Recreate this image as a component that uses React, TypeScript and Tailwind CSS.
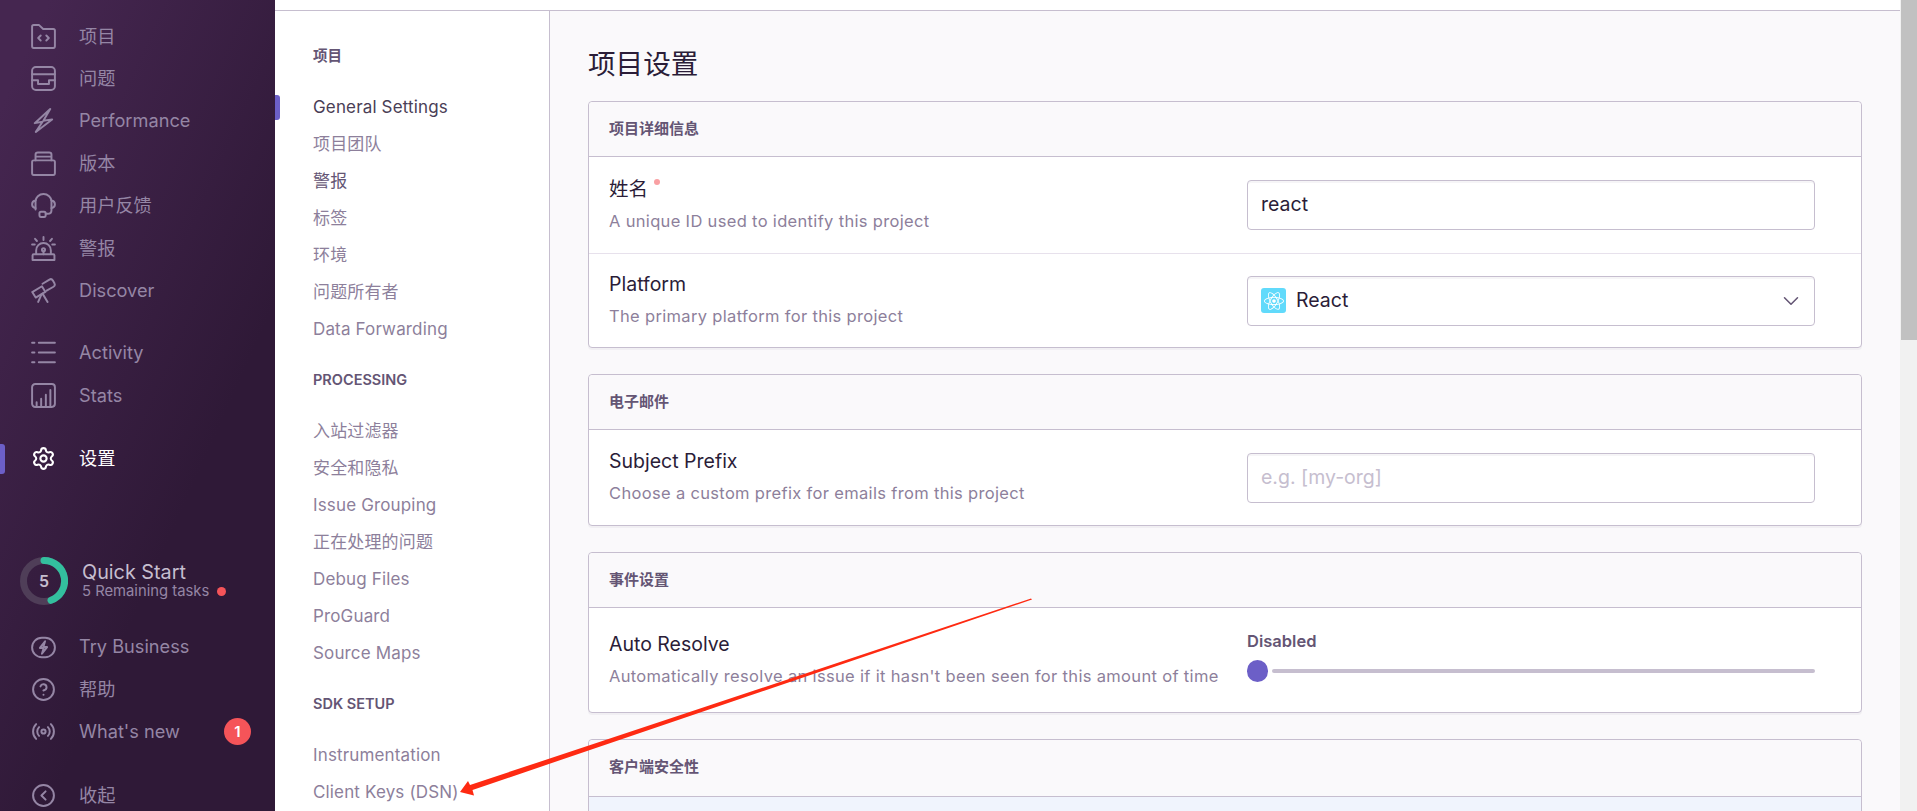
import type { ReactNode } from "react";
import { ChevronDown, CircleChevronLeft, CircleHelp, Radio, Settings } from "lucide-react";
import { FaReact } from "react-icons/fa";

function Ico({ children }: { children: ReactNode }) {
  return (
    <svg viewBox="0 0 16 16" fill="none" stroke="currentColor" strokeWidth="1.25" strokeLinecap="round" strokeLinejoin="round" className="h-[25px] w-[25px] shrink-0">
      {children}
    </svg>
  );
}

const ProjectIcon = () => (
  <Ico>
    <path d="M.7 14.300V1.700c0-.6.4-1 1-1h3.500l2.600 2.500h6.500c.6 0 1 .4 1 1v10.100c0 .6-.4 1-1 1H1.700c-.6 0-1-.4-1-1z" />
    <path d="M6.200 7.400 4.600 9l1.600 1.600M9.800 7.400 11.400 9l-1.600 1.600" />
  </Ico>
);
const IssuesIcon = () => (
  <Ico>
    <rect x=".7" y=".7" width="14.600" height="14.600" rx="2.400" />
    <path d="M.7 5.300h14.600M.7 9.100h3.800v2.400h7V9.100h3.800" />
  </Ico>
);
const BoltIcon = () => (
  <Ico>
    <path d="M12.300.7 2.400 9.700l5-.9-4.300 6.500L13.500 7.300l-5.600.9z" />
  </Ico>
);
const ReleasesIcon = () => (
  <Ico>
    <rect x=".7" y="6" width="14.600" height="9.300" rx="1" />
    <path d="M2.900 6V2.400c0-.9.5-1.500 1.500-1.500h7.200c1 0 1.500.6 1.500 1.500V6M2.900 3.600h10.200" />
  </Ico>
);
const SupportIcon = () => (
  <Ico>
    <path d="M2.900 10.600V5.200a5.100 4.500 0 0 1 10.200 0v5.800c0 1.400-1 2.300-2.400 2.300H9.400" />
    <path d="M2.900 4.800C1.500 5 .7 6 .7 7.200s.8 2.300 2.200 2.500M13.100 4.800c1.400.2 2.200 1.200 2.200 2.400s-.8 2.300-2.200 2.500" />
    <rect x="5.400" y="12" width="4" height="3.300" rx="1" />
  </Ico>
);
const SirenIcon = () => (
  <Ico>
    <path d="M1 15.300h14v-2.900c0-.4-.3-.7-.7-.7H1.700c-.4 0-.7.3-.7.7zM3.300 11.700V9.200a4.700 4.700 0 0 1 9.400 0v2.500" />
    <circle cx="8" cy="8.800" r="1" />
    <path d="M8 9.800v1.900M8 .7v1.800M2.600 1.800l1.200 1.400M13.400 1.800l-1.200 1.400M.7 5.500h1.700M13.600 5.500h1.700" />
  </Ico>
);
const TelescopeIcon = () => (
  <Ico>
    <path d="M.8 9 7 5.300l2.200 3.600-6.200 3.600z" />
    <path d="M7.400 3.700 11.800 1c.7-.4 1.700-.2 2.200.6l1 1.800c.4.800.2 1.700-.6 2.200l-4.400 2.500" />
    <path d="M6.800 10.300 4.600 15.300M7.400 10l3.200 5.300" />
  </Ico>
);
const ListIcon = () => (
  <Ico>
    <path d="M5 1.800h10.300M5 8h10.300M5 14.200h10.300M.7 1.800h1.500M.7 8h1.500M.7 14.200h1.500" />
  </Ico>
);
const StatsIcon = () => (
  <Ico>
    <rect x=".7" y=".7" width="14.600" height="14.600" rx="2" />
    <path d="M3.600 15.300v-3M6.500 15.300V10M9.500 15.300V7.500M12.400 15.300V4.500" />
  </Ico>
);
const BusinessIcon = () => (
  <Ico>
    <rect x=".7" y="1.800" width="14.600" height="12.400" rx="6.200" />
    <path d="M9 4 5.700 8.300h2.400L7 12l3.300-4.300H7.900z" />
  </Ico>
);

function NavRow({ icon, label, active, badge }: { icon: ReactNode; label: string; active?: boolean; badge?: string }) {
  return (
    <div className={`flex h-[42.400px] shrink-0 items-center gap-[23px] pl-[31px] pr-[24px] ${active ? "text-white" : "text-[#9586a5]"}`}>
      {icon}
      <span className="text-[18.200px]">{label}</span>
      {badge && (
        <span className="ml-auto flex h-[27px] w-[27px] items-center justify-center rounded-full bg-[#f55459] text-[15px] font-semibold text-white">
          {badge}
        </span>
      )}
    </div>
  );
}

function Sidebar() {
  const lucideCls = "h-[25px] w-[25px] shrink-0";
  return (
    <aside className="relative flex h-[811px] w-[275px] shrink-0 flex-col overflow-hidden bg-[linear-gradient(294.17deg,#2f1937_35.57%,#452650_92.42%,#452650_92.42%)] pt-[15px]">
      <NavRow icon={<ProjectIcon />} label="项目" />
      <NavRow icon={<IssuesIcon />} label="问题" />
      <NavRow icon={<BoltIcon />} label="Performance" />
      <NavRow icon={<ReleasesIcon />} label="版本" />
      <NavRow icon={<SupportIcon />} label="用户反馈" />
      <NavRow icon={<SirenIcon />} label="警报" />
      <NavRow icon={<TelescopeIcon />} label="Discover" />
      <div className="h-[20px] shrink-0" />
      <NavRow icon={<ListIcon />} label="Activity" />
      <NavRow icon={<StatsIcon />} label="Stats" />
      <div className="h-[21px] shrink-0" />
      <div className="relative shrink-0">
        <div className="absolute left-0 top-[6px] h-[30px] w-[5px] rounded-r-[3px] bg-[#6c5fc7]" />
        <NavRow icon={<Settings className={lucideCls} strokeWidth={2} />} label="设置" active />
      </div>

      <div className="mt-[77px] flex h-[48px] shrink-0 items-center gap-[14px] pl-[20px]">
        <div className="relative h-[48px] w-[48px] shrink-0">
          <svg viewBox="0 0 48 48" className="h-[48px] w-[48px]">
            <circle cx="24" cy="24" r="20.500" fill="none" stroke="#4f3e58" strokeWidth="7" />
            <path d="M24 3.500A20.500 20.500 0 0 1 31 43.300" fill="none" stroke="#33bf9e" strokeWidth="7" strokeLinecap="round" />
          </svg>
          <span className="absolute inset-0 flex items-center justify-center text-[16px] font-semibold text-[#c6becf]">5</span>
        </div>
        <div className="flex flex-col">
          <span className="text-[19.800px] leading-[22px] text-[#c6becf]">Quick Start</span>
          <span className="flex items-center gap-[8px] text-[14.800px] leading-[17px] text-[#9586a5]">
            5 Remaining tasks
            <span className="h-[9px] w-[9px] rounded-full bg-[#f55459]" />
          </span>
        </div>
      </div>

      <div className="mt-[21px] shrink-0">
        <NavRow icon={<BusinessIcon />} label="Try Business" />
        <NavRow icon={<CircleHelp className={lucideCls} strokeWidth={1.9} />} label="帮助" />
        <NavRow icon={<Radio className={lucideCls} strokeWidth={1.9} />} label="What's new" badge="1" />
      </div>
      <div className="mt-[21px] shrink-0">
        <NavRow icon={<CircleChevronLeft className={lucideCls} strokeWidth={1.9} />} label="收起" />
      </div>
    </aside>
  );
}

function SubSection({ title, items, itemColors = {} }: { title: string; items: string[]; itemColors?: Record<string, string> }) {
  return (
    <div className="mb-[21.800px]">
      <div className="mb-[23.800px] flex h-[20px] items-center text-[14.500px] font-semibold text-[#645574]">{title}</div>
      {items.map((item) => (
        <div key={item} className={`flex h-[36.900px] items-center text-[17px] tracking-[0.15px] ${itemColors[item] ?? "text-[#8d7f9b]"}`}>
          {item}
        </div>
      ))}
    </div>
  );
}

function SubNav() {
  return (
    <nav className="relative w-[275px] shrink-0 border-r border-[#c6becf] bg-white pl-[38px] pt-[35px]">
      <div className="absolute left-0 top-[84px] h-[25px] w-[5px] rounded-r-[3px] bg-[#6c5fc7]" />
      <SubSection
        title="项目"
        items={["General Settings", "项目团队", "警报", "标签", "环境", "问题所有者", "Data Forwarding"]}
        itemColors={{ "General Settings": "text-[#4a3e56]", 警报: "text-[#645574]" }}
      />
      <SubSection title="PROCESSING" items={["入站过滤器", "安全和隐私", "Issue Grouping", "正在处理的问题", "Debug Files", "ProGuard", "Source Maps"]} />
      <SubSection title="SDK SETUP" items={["Instrumentation", "Client Keys (DSN)"]} />
    </nav>
  );
}

function Card({ title, children, last }: { title: string; children?: ReactNode; last?: boolean }) {
  return (
    <section className={`shrink-0 rounded-[4px] border border-[#c6becf] bg-white shadow-[0_2px_0_rgba(37,11,54,0.04)] ${last ? "" : "mb-[26px]"}`}>
      <h3 className={`flex items-center rounded-t-[4px] border-b border-[#c6becf] bg-[#faf9fb] pl-[20px] text-[15px] font-semibold text-[#645574] ${last ? "h-[57px] pb-[2px]" : "h-[55px]"}`}>
        {title}
      </h3>
      {children}
    </section>
  );
}

function Row({ label, help, required, divider, height, children }: { label: string; help: string; required?: boolean; divider?: boolean; height: string; children: ReactNode }) {
  return (
    <div className={`flex items-center pl-[20px] pr-[46px] ${height} ${divider ? "border-b border-[#e7e1ec]" : ""}`}>
      <div className="min-w-0 flex-1 pb-[2px]">
        <div className="flex items-start text-[19.500px] leading-[22px] text-[#2b1d38]">
          {label}
          {required && <span className="ml-[6px] mt-[1px] h-[6px] w-[6px] rounded-full bg-[#f9a0a3]" />}
        </div>
        <div className="mt-[11px] whitespace-nowrap text-[16.500px] leading-[20px] tracking-[0.33px] text-[#8d7f9b]">{help}</div>
      </div>
      <div className="w-[568px] shrink-0">{children}</div>
    </div>
  );
}

const inputCls =
  "flex h-[50px] w-full items-center rounded-[4px] border border-[#c6becf] bg-white px-[13px] text-[19.500px] shadow-[inset_0_2px_0_rgba(37,11,54,0.04)]";

export default function App() {
  return (
    <div className="relative flex h-[811px] w-[1917px] overflow-hidden bg-[#faf9fb] [font-family:Inter,'Noto_Sans_CJK_SC',sans-serif]">
      <Sidebar />

      <div className="flex min-w-0 flex-1 flex-col">
        <div className="h-[11px] shrink-0 border-b border-[#c6becf] bg-white" />
        <div className="flex min-h-0 flex-1">
          <SubNav />
          <main className="flex min-w-0 flex-1 flex-col px-[38px]">
            <h1 className="mb-[22px] mt-[38px] text-[27.600px] leading-[30px] text-[#2b1d38]">项目设置</h1>

            <Card title="项目详细信息">
              <Row label="姓名" help="A unique ID used to identify this project" required divider height="h-[97px]">
                <div className={`${inputCls} text-[#2b1d38]`}>react</div>
              </Row>
              <Row label="Platform" help="The primary platform for this project" height="h-[93px]">
                <div className={`${inputCls} text-[#2b1d38]`}>
                  <span className="mr-[10px] flex h-[25px] w-[25px] items-center justify-center rounded-[3px] bg-[#61dafb] text-white">
                    <FaReact size={20} />
                  </span>
                  React
                  <ChevronDown className="-mr-[3px] ml-auto h-[26px] w-[26px] text-[#645574]" strokeWidth={1.4} />
                </div>
              </Row>
            </Card>

            <Card title="电子邮件">
              <Row label="Subject Prefix" help="Choose a custom prefix for emails from this project" height="h-[95px]">
                <div className={`${inputCls} text-[#c6becf]`}>e.g. [my-org]</div>
              </Row>
            </Card>

            <Card title="事件设置">
              <Row label="Auto Resolve" help="Automatically resolve an issue if it hasn't been seen for this amount of time" height="h-[104px]">
                <div className="mb-[7px]">
                  <div className="mb-[9px] text-[16.500px] font-semibold leading-[20px] text-[#645574]">Disabled</div>
                  <div className="flex items-center gap-[4px]">
                    <span className="h-[22px] w-[21px] rounded-full bg-[#6c5fc7]" />
                    <span className="h-[4px] flex-1 rounded-full bg-[#c6becf]" />
                  </div>
                </div>
              </Row>
            </Card>

            <Card title="客户端安全性" last>
              <div className="h-[100px] bg-[#f0f4fd]" />
            </Card>
          </main>
        </div>
      </div>

      {/* browser scrollbar */}
      <div className="h-[811px] w-[17px] shrink-0 bg-[#f1f1f1] pl-px">
        <div className="h-[340px] bg-[#c1c1c1]" />
      </div>

      {/* red annotation arrow drawn on top of the screenshot */}
      <svg className="pointer-events-none absolute left-0 top-0 h-[811px] w-[1917px]" viewBox="0 0 1917 811">
        <polygon points="460,792 468,781 470,785 1031,598.500 1032,599.500 472.500,790 474,795.500" fill="#fe2a12" />
      </svg>
    </div>
  );
}
